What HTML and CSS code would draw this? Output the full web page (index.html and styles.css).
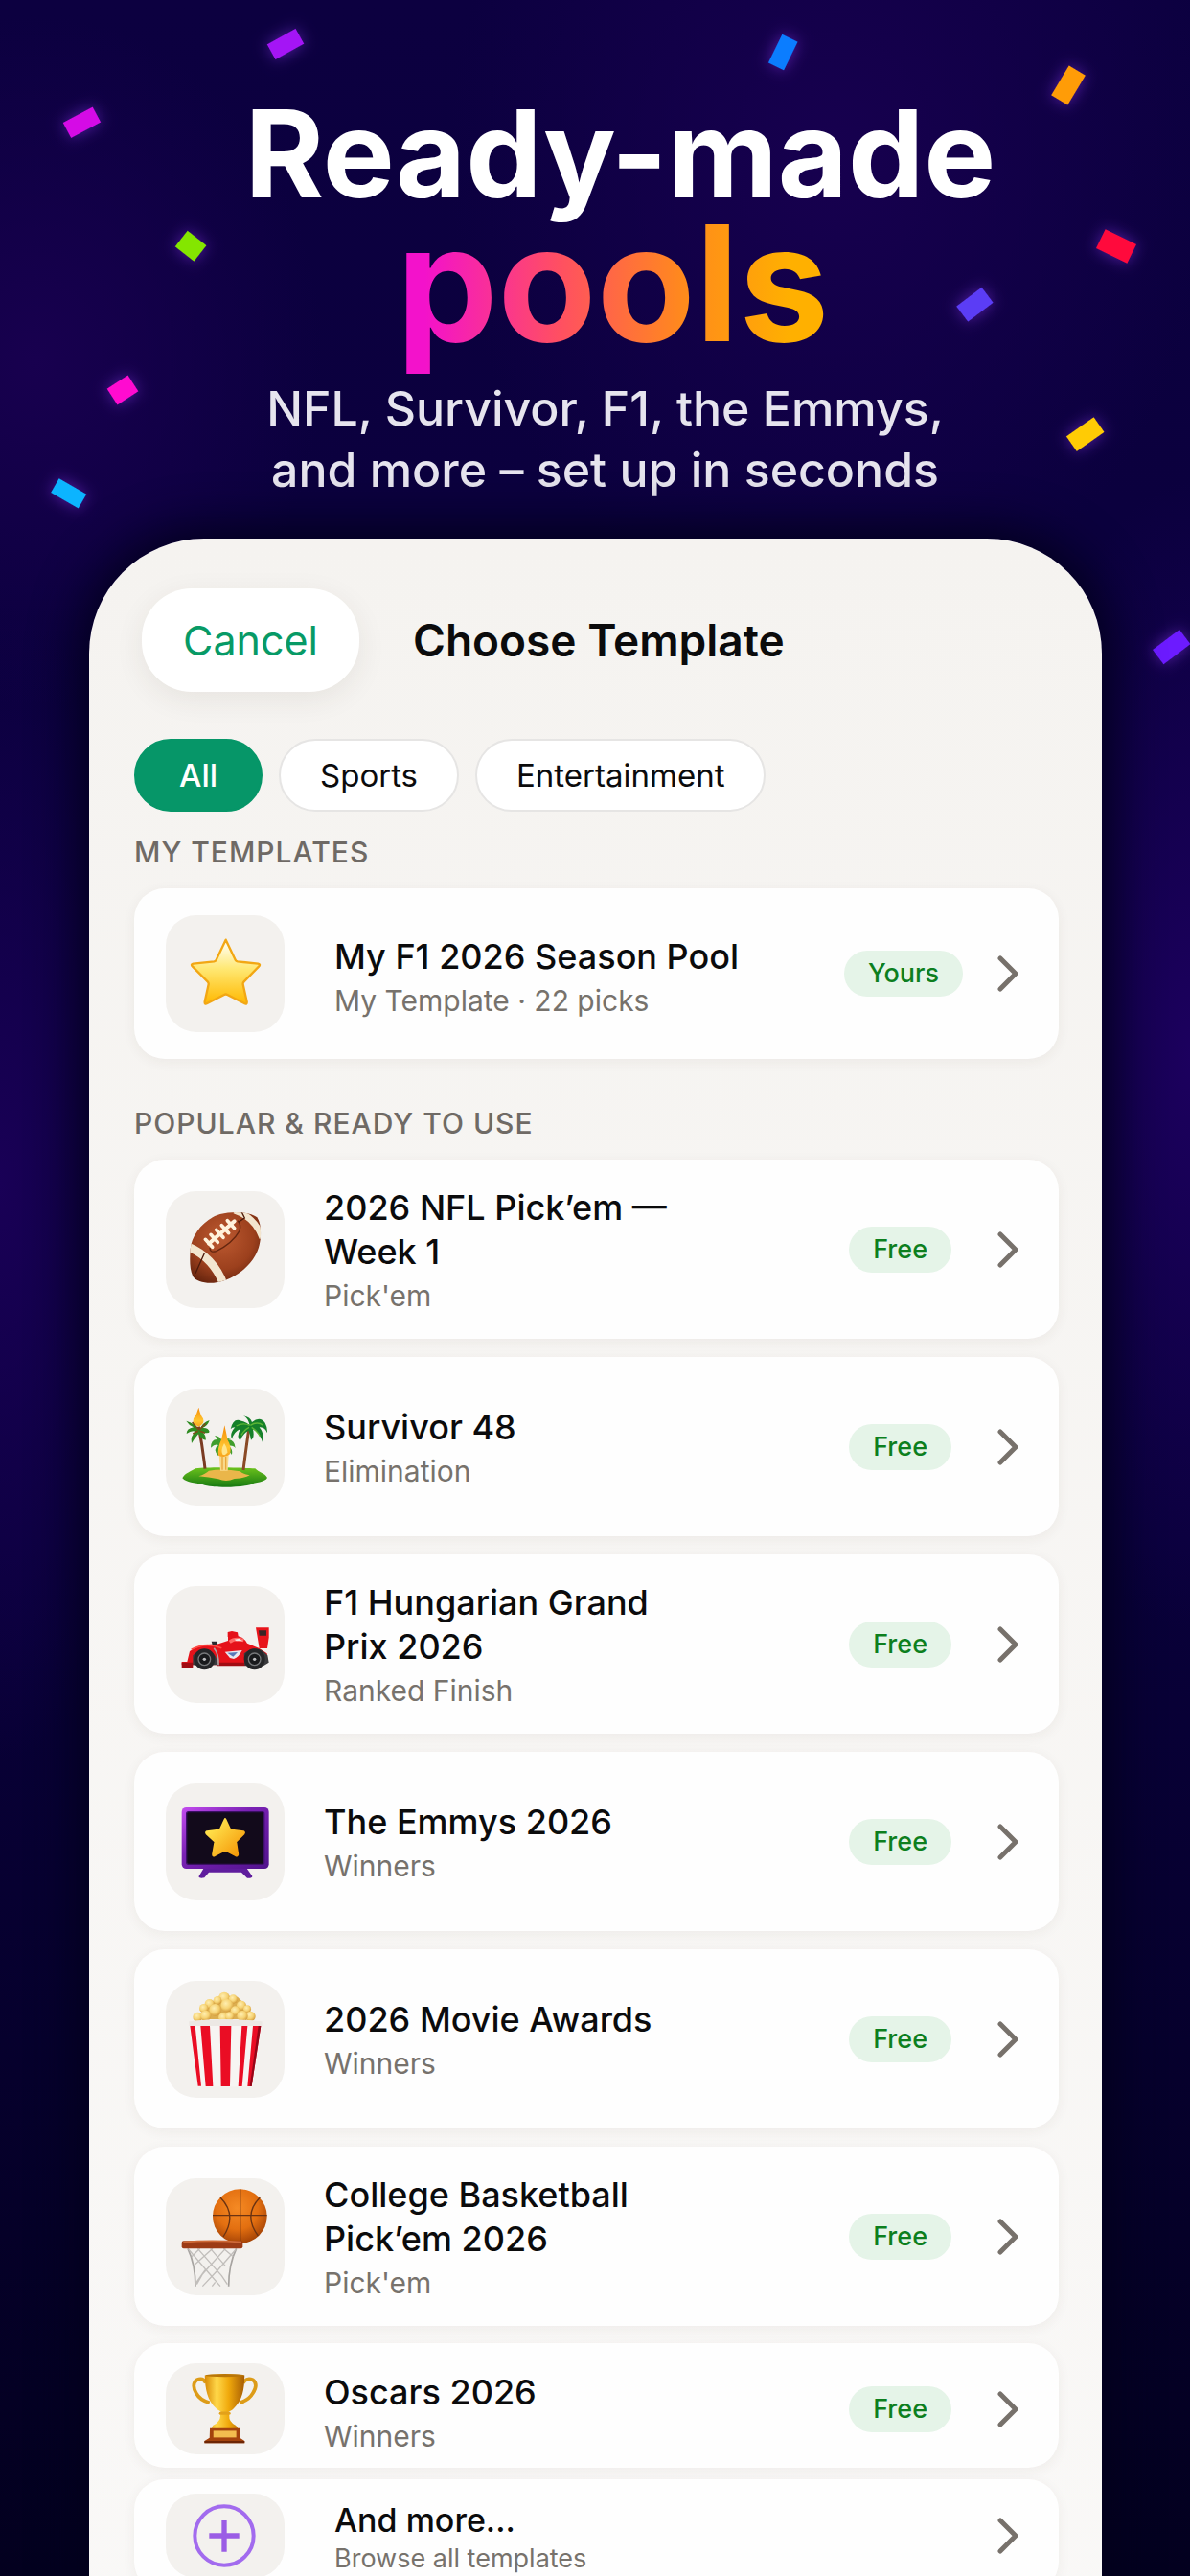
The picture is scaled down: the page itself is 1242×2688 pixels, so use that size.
FILE: index.html
```html
<!DOCTYPE html>
<html lang="en">
<head>
    <meta charset="UTF-8">
    <meta name="viewport" content="width=device-width, initial-scale=1">
    <title>Ready-made pools</title>
    <link rel="stylesheet" href="styles.css">
</head>
<body>
    <main class="page">
        <!-- confetti -->
        <svg class="confetti" viewBox="0 0 1242 720" aria-hidden="true">
            <rect fill="#a415f5" x="-17" y="-9" width="34" height="18" transform="translate(298 46) rotate(-29)"/>
            <rect fill="#d50be6" x="-17" y="-9" width="35" height="18" transform="translate(85 128) rotate(-28)"/>
            <rect fill="#84e600" x="-12" y="-10" width="25" height="21" transform="translate(199 256) rotate(38)"/>
            <rect fill="#ff0bd0" x="-13" y="-10" width="26" height="20" transform="translate(128 407) rotate(-33)"/>
            <rect fill="#0cb4ff" x="-16" y="-9" width="33" height="17" transform="translate(71 515) rotate(30)"/>
            <rect fill="#0b7dff" x="-16" y="-9" width="33" height="18" transform="translate(817 55) rotate(-64)"/>
            <rect fill="#ff9c07" x="-18" y="-10" width="36" height="20" transform="translate(1115 89) rotate(-59)"/>
            <rect fill="#ff0a3c" x="-18" y="-11" width="36" height="22" transform="translate(1165 257) rotate(26)"/>
            <rect fill="#5b3df5" x="-16" y="-10" width="33" height="20" transform="translate(1017 318) rotate(-37)"/>
            <rect fill="#ffcb05" x="-17" y="-9" width="35" height="19" transform="translate(1132 453) rotate(-35)"/>
            <rect fill="#6c1bff" x="-17" y="-9" width="35" height="19" transform="translate(1222 675) rotate(-37)"/>
        </svg>

        <header class="hero">
            <h1><span class="line">Ready-made</span> <span class="accent">pools</span></h1>
            <p>NFL, Survivor, F1, the Emmys,<br>and more – set up in seconds</p>
        </header>

        <section class="phone">
            <div class="topbar">
                <button type="button" class="cancel">Cancel</button>
                <h2>Choose Template</h2>
            </div>

            <div class="chips">
                <button type="button" class="chip active">All</button>
                <button type="button" class="chip">Sports</button>
                <button type="button" class="chip">Entertainment</button>
            </div>

            <h3>My Templates</h3>
            <a href="#" class="card mine">
                <svg class="tile" viewBox="0 0 372 360" aria-hidden="true">
                    <defs>
                        <linearGradient id="star" x1="0" y1="0" x2="0" y2="1">
                            <stop offset="0.1" stop-color="#fffbe0"/>
                            <stop offset="0.45" stop-color="#ffe873"/>
                            <stop offset="1" stop-color="#ffb800"/>
                        </linearGradient>
                    </defs>
                    <path d="M188 74 L218 137 Q220 141 225 142 L289 149 Q298 151 291 158 L245 205 Q241 209 242 214 L254 268 Q255 278 246 273 L193 246 Q188 243 183 246 L130 273 Q121 278 122 268 L134 214 Q135 209 131 205 L84 158 Q77 151 86 149 L151 142 Q156 141 158 137Z" fill="url(#star)" stroke="#f2a714" stroke-width="7" stroke-linejoin="round"/>
                </svg>
                <div class="text">
                    <h4>My F1 2026 Season Pool</h4>
                    <p>My Template · 22 picks</p>
                </div>
                <span class="badge">Yours</span>
                <svg class="chevron" viewBox="0 0 22 38" aria-hidden="true"><path d="M3 3l16 16L3 35"/></svg>
            </a>

            <h3>Popular &amp; Ready to Use</h3>
            <div class="list">
                <a href="#" class="card">
                    <svg class="tile" viewBox="25 68 372 366" aria-hidden="true">
                        <defs>
                            <radialGradient id="leather" cx="0.45" cy="0.38" r="0.65">
                                <stop offset="0" stop-color="#bd5a31"/>
                                <stop offset="0.6" stop-color="#9c401d"/>
                                <stop offset="1" stop-color="#5c1f0b"/>
                            </radialGradient>
                            <clipPath id="ball"><path d="M102 250C105 205 145 155 195 140C235 130 290 132 311 150C328 175 326 235 305 270C280 315 225 350 175 355C145 357 120 350 110 335C99 310 100 280 102 250Z"/></clipPath>
                        </defs>
                        <g clip-path="url(#ball)">
                            <rect x="90" y="120" width="250" height="250" fill="url(#leather)"/>
                            <path d="M95 242Q175 275 207 362" fill="none" stroke="#f3e6cf" stroke-width="26"/>
                            <path d="M240 128Q305 150 328 215" fill="none" stroke="#f3e6cf" stroke-width="20"/>
                            <path d="M146 262L118 325M260 128L272 152L252 165" fill="none" stroke="#4c1a0a" stroke-width="4"/>
                        </g>
                        <path d="M163 245Q163 262 183 256Q235 230 256 192Q262 170 250 160" fill="none" stroke="#65260f" stroke-width="4"/>
                        <path d="M160 232L240 162" stroke="#fff3dc" stroke-width="12" stroke-linecap="round"/>
                        <path d="M149 219L171 243M166 204L188 228M183 189L205 213M200 175L222 199M218 160L240 184" stroke="#fff3dc" stroke-width="11" stroke-linecap="round"/>
                    </svg>
                    <div class="text">
                        <h4>2026 NFL Pick’em — Week 1</h4>
                        <p>Pick'em</p>
                    </div>
                    <span class="badge">Free</span>
                    <svg class="chevron" viewBox="0 0 22 38" aria-hidden="true"><path d="M3 3l16 16L3 35"/></svg>
                </a>

                <a href="#" class="card">
                    <svg class="tile" viewBox="25 691 372 366" aria-hidden="true">
                        <defs>
                            <linearGradient id="grass" x1="0" y1="0" x2="0" y2="1">
                                <stop offset="0" stop-color="#6cc21c"/>
                                <stop offset="1" stop-color="#177a12"/>
                            </linearGradient>
                            <linearGradient id="flame" x1="0" y1="0" x2="0" y2="1">
                                <stop offset="0" stop-color="#f58a07"/>
                                <stop offset="0.7" stop-color="#ffc630"/>
                                <stop offset="1" stop-color="#f7a11b"/>
                            </linearGradient>
                        </defs>
                        <path d="M77 971C85 955 105 950 118 941C160 936 260 938 305 941C315 953 335 955 343 970C335 985 305 983 290 992C240 1003 170 1001 140 991C115 985 90 986 77 971Z" fill="url(#grass)"/>
                        <path d="M128 965Q150 958 160 948Q205 940 258 950Q262 957 288 962Q270 972 240 973Q215 984 190 974Q160 968 128 965Z" fill="#eab64a"/>
                        <path d="M128 810Q140 870 148 942" fill="none" stroke="#7b3b22" stroke-width="9"/>
                        <path d="M287 805Q276 880 268 946" fill="none" stroke="#8a4a26" stroke-width="9"/>
                        <path d="M130 822Q115 798 89 792Q98 806 112 812Q90 816 90 832Q108 820 118 826Q100 840 106 862Q116 845 128 832Q135 850 150 852Q152 840 142 828Q160 832 162 826Q158 812 140 814Q156 808 162 790Q140 796 130 822Z" fill="#2f8b22"/>
                        <path d="M128 820L108 796M130 820L150 800M126 824L110 832M132 824L148 830" stroke="#7a4d18" stroke-width="5"/>
                        <path d="M288 805Q282 782 268 776Q290 780 295 796Q320 776 336 798Q344 812 343 830Q335 810 318 812Q335 832 328 858Q318 828 298 818Q304 845 292 852Q290 835 284 822Q268 830 258 854Q245 845 258 818Q240 825 232 848Q224 832 242 812Q232 812 228 818Q236 780 262 792Q275 795 288 805Z" fill="#15802a"/>
                        <path d="M288 806Q266 796 246 808M290 806Q312 792 330 806M286 812Q270 820 262 836M294 812Q312 824 320 840" fill="none" stroke="#5bb534" stroke-width="4"/>
                        <path d="M205 860Q195 838 178 838Q186 846 188 850Q166 848 166 876Q180 862 190 868Q170 880 190 902Q196 880 206 870Q218 878 232 898Q236 880 222 870Q238 868 243 878Q242 852 220 850Q234 844 238 850Q228 834 205 860Z" fill="#3f9d2d"/>
                        <path d="M192 898H222L219 948H196Z" fill="#f8d98b"/>
                        <path d="M202 904V945M213 904V945" stroke="#e8a73c" stroke-width="4"/>
                        <path d="M209 806Q205 828 199 850Q186 880 190 900Q210 910 226 896Q232 872 219 852Q215 832 209 806Z" fill="url(#flame)"/>
                        <path d="M208 862Q196 885 203 897Q214 902 218 890Q218 878 208 862Z" fill="#ffe58c"/>
                        <path d="M128 750Q122 772 112 785Q106 802 128 810Q148 802 142 785Q134 775 128 750Z" fill="url(#flame)"/>
                    </svg>
                    <div class="text">
                        <h4>Survivor 48</h4>
                        <p>Elimination</p>
                    </div>
                    <span class="badge">Free</span>
                    <svg class="chevron" viewBox="0 0 22 38" aria-hidden="true"><path d="M3 3l16 16L3 35"/></svg>
                </a>

                <a href="#" class="card">
                    <svg class="tile" viewBox="25 51 372 366" aria-hidden="true">
                        <path d="M307 181H348V212L343 246H318Z" fill="#e8141b"/>
                        <path d="M316 190H340V206H318Z" fill="#3a2326"/>
                        <path d="M75 288H92L100 255Q135 232 190 232L220 222V210H219V195L232 192L250 196L252 208Q270 212 280 230L318 246L342 262L345 290L330 298H75Z" fill="#e5121a"/>
                        <path d="M75 290H110V308H75ZM186 290H290V301H186Z" fill="#a10c12"/>
                        <path d="M168 224H185V238H172Z" fill="#2b2b30"/>
                        <path d="M222 222Q240 206 270 216L268 226Q245 218 228 230Z" fill="#ff6a66"/>
                        <path d="M240 218L254 215L266 223L246 223Z" fill="#f4e6e4"/>
                        <path d="M105 250Q150 225 200 245" fill="none" stroke="#ff4a43" stroke-width="5"/>
                        <path d="M210 257L264 252Q254 274 238 279L226 276Z" fill="#e9e7ee"/>
                        <path d="M218 260L250 258L236 272Z" fill="#5878b8"/>
                        <path d="M110 268Q150 228 180 270L192 298H110ZM270 262Q310 228 344 268L348 290L332 300H272Z" fill="#3a3b3d"/>
                        <circle cx="146" cy="280" r="33" fill="#252628"/>
                        <circle cx="303" cy="280" r="33" fill="#252628"/>
                        <circle cx="146" cy="280" r="19" fill="#191a1c" stroke="#77797b" stroke-width="4"/>
                        <circle cx="303" cy="280" r="19" fill="#191a1c" stroke="#77797b" stroke-width="4"/>
                        <circle cx="146" cy="280" r="5" fill="#bcbdbf"/>
                        <circle cx="303" cy="280" r="5" fill="#bcbdbf"/>
                        <path d="M176 245Q192 265 190 298" fill="none" stroke="#a9a5a6" stroke-width="5"/>
                    </svg>
                    <div class="text">
                        <h4>F1 Hungarian Grand Prix 2026</h4>
                        <p>Ranked Finish</p>
                    </div>
                    <span class="badge">Free</span>
                    <svg class="chevron" viewBox="0 0 22 38" aria-hidden="true"><path d="M3 3l16 16L3 35"/></svg>
                </a>

                <a href="#" class="card">
                    <svg class="tile" viewBox="25 660 372 366" aria-hidden="true">
                        <defs>
                            <linearGradient id="frame" x1="0" y1="0" x2="1" y2="1">
                                <stop offset="0" stop-color="#c44cf0"/>
                                <stop offset="0.4" stop-color="#7a22b4"/>
                                <stop offset="1" stop-color="#50128c"/>
                            </linearGradient>
                            <linearGradient id="gold" x1="0" y1="0" x2="1" y2="1">
                                <stop offset="0.2" stop-color="#ffe04a"/>
                                <stop offset="0.9" stop-color="#f59a0a"/>
                            </linearGradient>
                        </defs>
                        <path d="M146 922H276L296 950Q296 957 280 956L262 938H160L146 955Q130 958 128 952Z" fill="#5f1d9d"/>
                        <rect x="75" y="735" width="273" height="192" rx="14" fill="url(#frame)"/>
                        <rect x="90" y="749" width="243" height="164" rx="6" fill="#120a1b" stroke="#3c0f66" stroke-width="4"/>
                        <path d="M211 772L227 806L268 811Q272 813 269 817L244 842L250 882Q249 888 244 885L211 868L178 885Q173 888 173 882L180 842L153 817Q150 813 154 811L195 806Z" fill="url(#gold)" stroke="url(#gold)" stroke-width="7" stroke-linejoin="round"/>
                    </svg>
                    <div class="text">
                        <h4>The Emmys 2026</h4>
                        <p>Winners</p>
                    </div>
                    <span class="badge">Free</span>
                    <svg class="chevron" viewBox="0 0 22 38" aria-hidden="true"><path d="M3 3l16 16L3 35"/></svg>
                </a>

                <a href="#" class="card">
                    <svg class="tile" viewBox="25 45 372 366" aria-hidden="true">
                        <defs>
                            <radialGradient id="corn" cx="0.4" cy="0.35" r="0.7">
                                <stop offset="0" stop-color="#ffeeb0"/>
                                <stop offset="0.55" stop-color="#f6d374"/>
                                <stop offset="1" stop-color="#cf9433"/>
                            </radialGradient>
                        </defs>
                        <path d="M125 165L150 125L200 90L250 95L285 130L300 165Z" fill="#dcae50"/>
                        <g fill="url(#corn)">
                            <circle cx="208" cy="98" r="18"/>
                            <circle cx="236" cy="102" r="14"/>
                            <circle cx="187" cy="106" r="13"/>
                            <circle cx="162" cy="117" r="15"/>
                            <circle cx="262" cy="122" r="15"/>
                            <circle cx="217" cy="122" r="20"/>
                            <circle cx="144" cy="131" r="14"/>
                            <circle cx="280" cy="133" r="12"/>
                            <circle cx="180" cy="136" r="19"/>
                            <circle cx="243" cy="139" r="15"/>
                            <circle cx="125" cy="158" r="15"/>
                            <circle cx="150" cy="154" r="17"/>
                            <circle cx="290" cy="156" r="16"/>
                            <circle cx="265" cy="155" r="17"/>
                            <circle cx="205" cy="160" r="15"/>
                            <circle cx="225" cy="156" r="14"/>
                        </g>
                        <path d="M97 172Q210 160 327 172L326 186L297 376H128L98 186Z" fill="#f7f5f3"/>
                        <path d="M101 186H117L136 374H126ZM134 186H163L173 375H150ZM195 186H230L226 375H198ZM263 186H281L264 375H252ZM298 186H323L294 375H281Z" fill="#ea0d24"/>
                        <path d="M315 186H323L294 375H288Z" fill="#930718"/>
                        <path d="M97 172Q210 160 327 172V186H98Z" fill="#ece8e4"/>
                    </svg>
                    <div class="text">
                        <h4>2026 Movie Awards</h4>
                        <p>Winners</p>
                    </div>
                    <span class="badge">Free</span>
                    <svg class="chevron" viewBox="0 0 22 38" aria-hidden="true"><path d="M3 3l16 16L3 35"/></svg>
                </a>

                <a href="#" class="card">
                    <svg class="tile" viewBox="25 660 372 366" aria-hidden="true">
                        <defs>
                            <radialGradient id="orange" cx="0.45" cy="0.35" r="0.65">
                                <stop offset="0" stop-color="#f58a24"/>
                                <stop offset="0.6" stop-color="#e36f10"/>
                                <stop offset="1" stop-color="#a64406"/>
                            </radialGradient>
                        </defs>
                        <circle cx="257" cy="779" r="85" fill="url(#orange)"/>
                        <path d="M258 694V864M172 776H342M196 720Q250 775 205 843M320 720Q266 775 314 840" fill="none" stroke="#6b3312" stroke-width="4"/>
                        <path d="M94 880Q118 930 118 998M246 880Q222 930 222 998" fill="none" stroke="#a7a4a1" stroke-width="5"/>
                        <path d="M96 882L150 945L118 990M125 880L200 965L218 992M165 880L212 935M245 882L190 945L140 998M212 880L140 960L122 992M172 880L116 930M150 945L196 998M180 985L170 998M106 905L132 880M236 905L206 880" fill="none" stroke="#c1bebb" stroke-width="4"/>
                        <rect x="75" y="856" width="191" height="24" rx="6" fill="#9c3b16"/>
                        <path d="M80 860Q170 852 262 860" fill="none" stroke="#cf6a38" stroke-width="5"/>
                    </svg>
                    <div class="text">
                        <h4>College Basketball Pick’em 2026</h4>
                        <p>Pick'em</p>
                    </div>
                    <span class="badge">Free</span>
                    <svg class="chevron" viewBox="0 0 22 38" aria-hidden="true"><path d="M3 3l16 16L3 35"/></svg>
                </a>
            </div>

            <div class="list compact">
                <a href="#" class="card">
                    <svg class="tile" viewBox="25 74 372 286" aria-hidden="true">
                        <defs>
                            <linearGradient id="cup">
                                <stop offset="0" stop-color="#d98a06"/>
                                <stop offset="0.3" stop-color="#ffd84a"/>
                                <stop offset="0.6" stop-color="#f0a90c"/>
                                <stop offset="1" stop-color="#a65c03"/>
                            </linearGradient>
                        </defs>
                        <path d="M150 136Q142 118 122 126Q104 140 120 168Q132 190 162 198M268 136Q278 118 298 126Q316 140 298 168Q286 190 256 198" fill="none" stroke="#dd9c18" stroke-width="11"/>
                        <path d="M147 112Q210 102 272 112Q272 180 245 208Q232 224 222 226L224 238Q222 258 245 270L252 280H168L172 270Q196 258 196 238L198 226Q186 222 175 208Q148 180 147 112Z" fill="url(#cup)"/>
                        <ellipse cx="210" cy="112" rx="61" ry="5" fill="#b97608"/>
                        <rect x="192" y="226" width="36" height="10" rx="5" fill="#e3a11a"/>
                        <path d="M163 278H257V308L272 318V325H146V318L162 308Z" fill="#a4430d"/>
                        <rect x="174" y="286" width="72" height="21" fill="#f3bc4e"/>
                        <path d="M146 318H272V325H146Z" fill="#6d2605"/>
                    </svg>
                    <div class="text">
                        <h4>Oscars 2026</h4>
                        <p>Winners</p>
                    </div>
                    <span class="badge">Free</span>
                    <svg class="chevron" viewBox="0 0 22 38" aria-hidden="true"><path d="M3 3l16 16L3 35"/></svg>
                </a>

                <a href="#" class="card mine more">
                    <svg class="tile" viewBox="25 486 372 264" aria-hidden="true">
                        <circle cx="208" cy="618" r="92" fill="none" stroke="#a26bee" stroke-width="12"/>
                        <path d="M208 570V668M161 618H255" stroke="#9b5de5" stroke-width="16"/>
                    </svg>
                    <div class="text">
                        <h4>And more...</h4>
                        <p>Browse all templates</p>
                    </div>
                    <svg class="chevron" viewBox="0 0 22 38" aria-hidden="true"><path d="M3 3l16 16L3 35"/></svg>
                </a>
            </div>
        </section>
    </main>
</body>
</html>
```
FILE: styles.css
```css
* {
    box-sizing: border-box;
}

body {
    margin: 0;
    font-family: Inter, "Liberation Sans", sans-serif;
    background: #07002e;
    color: #0b0b0c;
}

h1, h2, h3, h4, p {
    margin: 0;
}

button {
    font-family: inherit;
    cursor: pointer;
}

.page {
    position: relative;
    height: 100vh;
    overflow: hidden;
    padding: 100px 92px 0 93px;
    background:
        radial-gradient(ellipse 400px 500px at 70% 6%, #17004f 0%, transparent 100%),
        radial-gradient(ellipse 300px 360px at 3% 14%, #18004f 0%, transparent 100%),
        radial-gradient(ellipse 200px 600px at 100% 41%, #1c005e 0%, transparent 100%),
        radial-gradient(ellipse 200px 600px at 0% 46%, #190056 0%, transparent 100%),
        linear-gradient(#0c0040, #09003a 60%, #03001f);
}

.confetti {
    position: absolute;
    top: 0;
    left: 0;
    width: 100%;
}

.confetti rect {
    filter: drop-shadow(0 0 8px rgba(150, 60, 255, 0.5));
}

/* headline */
.hero {
    position: relative;
    height: 462px;
    padding-left: 20px;
    text-align: center;
}

.hero h1 {
    padding-left: 16px;
    font-weight: 700;
    color: #fff;
}

.hero h1 span {
    display: block;
}

.hero .line {
    padding-left: 16px;
    font-size: 126px;
    line-height: 120px;
}

.hero .accent {
    width: fit-content;
    margin: 0 auto;
    padding: 0 8px 20px;
    font-size: 168px;
    line-height: 150px;
    color: transparent;
    background: linear-gradient(90deg, #f312cb 8%, #ff4f62 38%, #ff8a1c 66%, #ffb000 90%);
    -webkit-background-clip: text;
    background-clip: text;
}

.hero p {
    margin-top: 4px;
    font-size: 50px;
    line-height: 64px;
    font-weight: 500;
    color: #e6e4ee;
}

/* phone screen */
.phone {
    position: relative;
    min-height: 100%;
    padding: 52px 45px 0 47px;
    background: linear-gradient(#f5f3f0, #faf9f8);
    border-radius: 120px 120px 0 0;
    box-shadow: 0 0 50px 10px #03001c;
}

.topbar {
    display: flex;
    align-items: center;
    gap: 56px;
    padding-left: 8px;
}

.cancel {
    padding: 0 43px;
    border: none;
    border-radius: 52px;
    background: #fff;
    color: #079a66;
    font-size: 43px;
    line-height: 108px;
    box-shadow: 0 8px 30px rgba(60, 50, 40, 0.08);
}

.topbar h2 {
    font-size: 46px;
    font-weight: 600;
}

.chips {
    display: flex;
    gap: 17px;
    margin: 49px 0 24px;
}

.chip {
    padding: 0 41px;
    border: 2px solid #e6e5e4;
    border-radius: 38px;
    background: #fff;
    color: #0b0b0c;
    font-size: 33px;
    line-height: 72px;
}

.chip.active {
    padding: 0 45px;
    border-color: #069668;
    background: #069668;
    color: #fff;
    font-weight: 500;
}

h3 {
    margin-bottom: 20px;
    font-size: 30px;
    line-height: 36px;
    font-weight: 500;
    letter-spacing: 1px;
    text-transform: uppercase;
    color: #6f6a65;
}

.card {
    display: flex;
    align-items: center;
    min-height: 187px;
    padding: 0 42px 0 33px;
    border-radius: 32px;
    background: #fefefe;
    color: inherit;
    text-decoration: none;
    box-shadow: 0 3px 14px rgba(60, 50, 40, 0.06);
}

.card.mine {
    min-height: 178px;
    margin-bottom: 49px;
}

.tile {
    width: 124px;
    height: 122px;
    border-radius: 32px;
    background: #f3f1ee;
}

.text {
    flex: 1;
    padding: 5px 0 0 41px;
}

.mine .text {
    padding: 9px 0 0 52px;
}

.text h4 {
    max-width: 400px;
    font-size: 36px;
    line-height: 46px;
    font-weight: 500;
}

.mine .text h4 {
    max-width: none;
}

.text p {
    font-size: 30px;
    line-height: 46px;
    color: #77726c;
}

.badge {
    margin-right: 48px;
    padding: 0 25px;
    border-radius: 24px;
    background: #e5f4e8;
    color: #0d7f1e;
    font-size: 27px;
    line-height: 48px;
    font-weight: 500;
}

.mine .badge {
    margin-right: 36px;
}

.chevron {
    width: 22px;
    height: 38px;
    fill: none;
    stroke: #77716b;
    stroke-width: 5;
    stroke-linecap: round;
    stroke-linejoin: round;
}

.list {
    display: grid;
    gap: 19px;
}

/* shorter rows at the end of the list */
.compact {
    gap: 12px;
    margin-top: 18px;
}

.compact .card {
    min-height: 130px;
    padding-top: 7px;
    margin: 0;
}

.compact .tile {
    height: 95px;
}

.compact .text {
    padding-top: 10px;
}

.compact .card.more {
    min-height: 118px;
    padding-top: 0;
}

.compact .more .tile {
    height: 88px;
}

.compact .more .text {
    padding-top: 2px;
}

.more .text h4 {
    font-size: 34px;
}

.more .text p {
    font-size: 27px;
    line-height: 34px;
}
```
